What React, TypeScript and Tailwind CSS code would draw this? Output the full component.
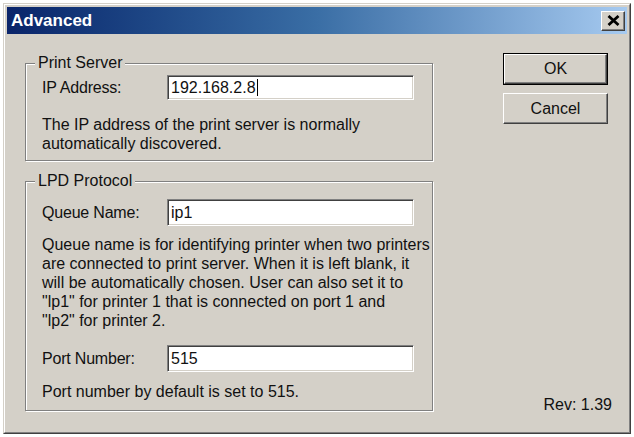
import React from "react";

const font = { fontFamily: '"Liberation Sans", Arial, sans-serif' };

function Field({ label, value, h, caret }: { label: string; value: string; h: string; caret?: boolean }) {
  return (
    <div className="flex items-center">
      <div className="w-[141px] pl-[16px] text-[16px] leading-[19px] text-[#111] tracking-[-0.2px]">{label}</div>
      <div
        className={`w-[247px] ${h} bg-white border border-t-[#808080] border-l-[#808080] border-b-white border-r-white shadow-[inset_1px_1px_0_#404040,inset_-1px_-1px_0_#d4d0c8] flex items-center pl-[3px] text-[16px] text-[#111]`}
      >
        <span>{value}</span>
        {caret && <span className="w-[1px] h-[17px] bg-black ml-[1px]" />}
      </div>
    </div>
  );
}

function Group({ title, children, cls }: { title: string; children: React.ReactNode; cls: string }) {
  return (
    <div className={`relative w-[408px] border border-[#808080] shadow-[inset_1px_1px_0_#fff,1px_1px_0_#fff] ${cls}`}>
      <div className="absolute -top-[11px] left-[9px] px-[3px] bg-[#d4d0c8] text-[16px] leading-[19px] text-[#111]">
        {title}
      </div>
      {children}
    </div>
  );
}

const para = "pl-[16px] text-[16px] leading-[19px] text-[#111] whitespace-nowrap";

export default function App() {
  return (
    <div className="w-[634px] h-[437px] bg-white pt-[3px] pl-[3px]" style={font}>
      <div className="w-[628px] h-[431px] border border-t-[#d4d0c8] border-l-[#d4d0c8] border-r-[#404040] border-b-[#404040]">
        <div className="w-full h-full border border-t-white border-l-white border-r-[#808080] border-b-[#808080] bg-[#d4d0c8] p-[2px] flex flex-col">
          <div className="h-[27px] flex items-center justify-between pl-[4px] pr-[2px] bg-gradient-to-r from-[#0a246a] via-[#3a6ea5] to-[#a6caf0]">
            <span className="text-white font-bold text-[17px] leading-none">Advanced</span>
            <div className="w-[24px] h-[20px] bg-[#d4d0c8] border border-t-white border-l-white border-r-[#404040] border-b-[#404040] shadow-[inset_-1px_-1px_0_#808080] flex items-center justify-center">
              <svg width="13" height="11" viewBox="0 0 13 11">
                <path d="M1.5 1 L11.5 10 M11.5 1 L1.5 10" stroke="#000" strokeWidth="2.8" />
              </svg>
            </div>
          </div>
          <div className="flex flex-1 pl-[18px]">
            <div className="flex flex-col">
              <Group title="Print Server" cls="mt-[29px] pt-[11px] pb-[7px]">
                <Field label="IP Address:" value="192.168.2.8" h="h-[25px]" caret />
                <p className={`mt-[15px] ${para}`}>
                  The IP address of the print server is normally
                  <br />
                  automatically discovered.
                </p>
              </Group>
              <Group title="LPD Protocol" cls="mt-[20px] pt-[17px] pb-[9px]">
                <Field label="Queue Name:" value="ip1" h="h-[27px]" />
                <p className={`mt-[9px] ${para}`}>
                  Queue name is for identifying printer when two printers
                  <br />
                  are connected to print server. When it is left blank, it
                  <br />
                  will be automatically chosen. User can also set it to
                  <br />
                  "lp1" for printer 1 that is connected on port 1 and
                  <br />
                  "lp2" for printer 2.
                </p>
                <div className="mt-[15px]">
                  <Field label="Port Number:" value="515" h="h-[27px]" />
                </div>
                <p className={`mt-[10px] ${para}`}>Port number by default is set to 515.</p>
              </Group>
            </div>
            <div className="ml-[70px] w-[109px] flex flex-col">
              <button className="mt-[19px] w-[105px] h-[32px] border border-black bg-[#d4d0c8] text-[16px] text-[#111]">
                <div className="w-full h-full border border-t-white border-l-white border-r-[#404040] border-b-[#404040] shadow-[inset_-1px_-1px_0_#808080] flex items-center justify-center">
                  OK
                </div>
              </button>
              <button className="mt-[8px] w-[105px] h-[31px] border border-t-white border-l-white border-r-[#404040] border-b-[#404040] shadow-[inset_-1px_-1px_0_#808080] bg-[#d4d0c8] text-[16px] text-[#111] flex items-center justify-center">
                Cancel
              </button>
              <div className="mt-auto mb-[16px] text-right text-[16px] leading-[19px] text-[#111]">Rev: 1.39</div>
            </div>
          </div>
        </div>
      </div>
    </div>
  );
}
